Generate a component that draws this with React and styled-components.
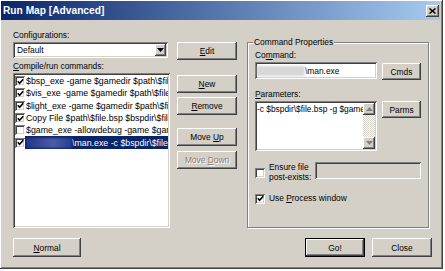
import React from 'react';
import styled, { createGlobalStyle, css } from 'styled-components';

const face = '#d4d0c8';

const GlobalStyle = createGlobalStyle`
  html, body { margin: 0; padding: 0; background: #fff; }
  body {
    font-family: "Liberation Sans", Arial, sans-serif;
    font-size: 8.4px;
    color: #000;
  }
`;

const raised = css`
  box-shadow: inset -1px -1px #404040, inset 1px 1px #fff, inset -2px -2px #808080, inset 2px 2px ${face};
`;

const sunken = css`
  box-shadow: inset 1px 1px #808080, inset -1px -1px #fff, inset 2px 2px #404040, inset -2px -2px ${face};
`;

const Window = styled.div`
  width: 443px;
  height: 269px;
  box-sizing: border-box;
  padding: 1px 3px 3px 1px;
  background: ${face};
  box-shadow: inset -1px -1px #404040, inset 1px 1px #fff, inset -2px -2px #808080;
  display: flex;
  flex-direction: column;
`;

const TitleBar = styled.div`
  height: 19px;
  display: flex;
  align-items: center;
  justify-content: space-between;
  background: linear-gradient(to right, #0a246a, #a6caf0);
  padding: 0 1px 0 2px;
`;

const Title = styled.span`
  color: #fff;
  font-weight: bold;
  font-size: 10.2px;
`;

const CloseBtn = styled.span`
  width: 13px;
  height: 12px;
  background: ${face};
  ${raised}
  display: flex;
  align-items: center;
  justify-content: center;
`;

const Body = styled.div`
  flex: 1;
  display: flex;
  flex-direction: column;
  padding: 9px 8px 0 12px;
`;

const Top = styled.div`
  display: grid;
  grid-template-columns: 157px 60px 185px;
  column-gap: 7px;
  & > :last-child { margin-left: 3px; }
`;

const Column = styled.div`
  display: flex;
  flex-direction: column;
`;

const Label = styled.div`
  height: 12px;
  line-height: 12px;
  margin-top: ${p => p.$mt || 0}px;
  margin-bottom: ${p => p.$mb || 0}px;
  white-space: nowrap;
`;

const Combo = styled.div`
  width: 155px;
  height: 16px;
  box-sizing: border-box;
  background: #fff;
  ${sunken}
  display: flex;
  align-items: center;
  justify-content: space-between;
  padding: 2px 2px 2px 4px;
`;

const DropBtn = styled.span`
  width: 11px;
  height: 12px;
  background: ${face};
  ${raised}
  display: flex;
  align-items: center;
  justify-content: center;
`;

const ListBox = styled.div`
  height: 155px;
  box-sizing: border-box;
  padding: 2px;
  background: #fff;
  ${sunken}
  overflow: hidden;
  font-size: 8.8px;
`;

const Row = styled.div`
  height: 12.3px;
  display: flex;
  align-items: center;
`;

const RowText = styled.span`
  flex: 1;
  height: 100%;
  display: flex;
  align-items: center;
  padding-left: 1px;
  white-space: nowrap;
  overflow: hidden;
  background: ${p => (p.$selected ? '#0a246a' : 'transparent')};
  color: ${p => (p.$selected ? '#fff' : '#000')};
`;

const Box = styled.span`
  width: 10px;
  height: 10px;
  flex: none;
  box-sizing: border-box;
  background: #fff;
  ${sunken}
  display: flex;
  align-items: center;
  justify-content: center;
  margin-top: ${p => p.$mt || 0}px;
`;

const Smudge = styled.span`
  display: inline-block;
  flex: none;
  width: ${p => p.$w}px;
  height: 10px;
  background: ${p => p.$bg};
  filter: blur(0.8px);
`;

const Button = styled.button`
  width: ${p => p.$w || 60}px;
  height: ${p => p.$h || 18}px;
  flex: none;
  margin-top: ${p => p.$mt || 0}px;
  padding: 0;
  border: 0;
  background: ${face};
  font: inherit;
  color: #000;
  ${raised}
  &:disabled {
    color: #808080;
    text-shadow: 1px 1px #fff;
  }
  ${p => p.$default && css`
    box-shadow: inset 0 0 0 1px #000, inset -2px -2px #404040, inset 2px 2px #fff, inset -3px -3px #808080;
  `}
`;

const GroupBox = styled.div`
  margin-top: 13px;
  border: 1px solid #808080;
  box-shadow: inset 1px 1px #fff, 1px 1px #fff;
  padding: 0 7px 0 7px;
  display: flex;
  flex-direction: column;
`;

const Legend = styled.div`
  align-self: flex-start;
  height: 12px;
  line-height: 12px;
  margin: -7px 0 1px -2px;
  padding: 0 1px;
  background: ${face};
`;

const FieldRow = styled.div`
  display: flex;
  align-items: flex-start;
  gap: 5px;
  margin-top: ${p => p.$mt || 0}px;
`;

const TextField = styled.div`
  width: ${p => p.$w}px;
  height: ${p => p.$h || 17}px;
  box-sizing: border-box;
  padding: 2px;
  background: ${p => (p.$disabled ? face : '#fff')};
  ${sunken}
  display: flex;
  align-items: ${p => (p.$multi ? 'stretch' : 'center')};
  overflow: hidden;
  white-space: nowrap;
`;

const AreaText = styled.div`
  flex: 1;
  overflow: hidden;
  padding: 1px 0 0 0;
  line-height: 11px;
`;

const ScrollBar = styled.div`
  width: 12px;
  flex: none;
  display: flex;
  flex-direction: column;
  background: repeating-conic-gradient(#fff 0 25%, ${face} 0 50%) 0 0 / 2px 2px;
`;

const ScrollBtn = styled.span`
  height: 12px;
  background: ${face};
  ${raised}
  display: flex;
  align-items: center;
  justify-content: center;
`;

const Track = styled.span`
  flex: 1;
`;

const CheckRow = styled.div`
  display: flex;
  align-items: ${p => p.$align || 'center'};
  margin-top: ${p => p.$mt || 0}px;
  height: ${p => p.$h || 'auto'};
`;

const CheckLabel = styled.span`
  flex: ${p => (p.$grow ? 1 : 'none')};
  margin-left: 4px;
  line-height: 10.3px;
`;

const Bottom = styled.div`
  display: flex;
  align-items: center;
  gap: 7px;
  margin-top: 10px;
  & > :first-child { margin-right: auto; }
`;

const Tick = () => (
  <svg width="7" height="7" viewBox="0 0 7 7">
    <polyline points="0.8,3.2 2.6,5.2 6.2,1.2" fill="none" stroke="#000" strokeWidth="1.6" />
  </svg>
);

const CheckBox = ({ checked, mt }) => <Box $mt={mt}>{checked && <Tick />}</Box>;

const Arrow = ({ up, color = '#000' }) => (
  <svg width="7" height="4" viewBox="0 0 7 4">
    <polygon points={up ? '0,4 7,4 3.5,0' : '0,0 7,0 3.5,4'} fill={color} />
  </svg>
);

const commands = [
  { on: true, text: '$bsp_exe -game $gamedir $path\\$file' },
  { on: true, text: '$vis_exe -game $gamedir $path\\$file' },
  { on: true, text: '$light_exe -game $gamedir $path\\$file' },
  { on: true, text: 'Copy File $path\\$file.bsp $bspdir\\$file' },
  { on: false, text: '$game_exe -allowdebug -game $gamedir' },
];

export default function App() {
  return (
    <>
      <GlobalStyle />
      <Window>
        <TitleBar>
          <Title>Run Map [Advanced]</Title>
          <CloseBtn>
            <svg width="7" height="6" viewBox="0 0 7 6">
              <path d="M0.5 0.5 L6.5 5.5 M6.5 0.5 L0.5 5.5" stroke="#000" strokeWidth="1.5" />
            </svg>
          </CloseBtn>
        </TitleBar>
        <Body>
          <Top>
            <Column>
              <Label $mb={1}>Configurations:</Label>
              <Combo>
                <span>Default</span>
                <DropBtn><Arrow /></DropBtn>
              </Combo>
              <Label $mt={2} $mb={1}><u>C</u>ompile/run commands:</Label>
              <ListBox>
                {commands.map((c, i) => (
                  <Row key={i}>
                    <CheckBox checked={c.on} />
                    <RowText>{c.text}</RowText>
                  </Row>
                ))}
                <Row>
                  <CheckBox checked />
                  <RowText $selected>
                    <Smudge $w={46} $bg="linear-gradient(to right, #22368a, #4a5ca8 60%, #2a3c8c)" />
                    \man.exe -c $bspdir\$file
                  </RowText>
                </Row>
              </ListBox>
            </Column>

            <Column>
              <Button $mt={13}><u>E</u>dit</Button>
              <Button $mt={15}><u>N</u>ew</Button>
              <Button $mt={4}><u>R</u>emove</Button>
              <Button $mt={13}>Move <u>U</u>p</Button>
              <Button $mt={5} disabled>Move <u>D</u>own</Button>
            </Column>

            <GroupBox>
              <Legend>Command Properties</Legend>
              <Label>Co<u>m</u>mand:</Label>
              <FieldRow $mt={1}>
                <TextField $w={125}>
                  <Smudge $w={48} $bg="repeating-linear-gradient(90deg, #b8b8b8 0 1px, #e6e6e6 1px 3px)" />
                  \man.exe
                </TextField>
                <Button $w={39} $h={17} $mt={1}>Cmds</Button>
              </FieldRow>
              <Label $mt={8} $mb={1}><u>P</u>arameters:</Label>
              <FieldRow>
                <TextField $w={125} $h={50} $multi>
                  <AreaText>-c $bspdir\$file.bsp -g $gamedir</AreaText>
                  <ScrollBar>
                    <ScrollBtn><Arrow up color="#808080" /></ScrollBtn>
                    <Track />
                    <ScrollBtn><Arrow color="#808080" /></ScrollBtn>
                  </ScrollBar>
                </TextField>
                <Button $w={39} $h={17}>Parms</Button>
              </FieldRow>
              <CheckRow $align="flex-start" $mt={11}>
                <CheckBox mt={6} />
                <CheckLabel $grow>Ensure file<br />post-exists:</CheckLabel>
                <TextField $w={106} $disabled />
              </CheckRow>
              <CheckRow $mt={10} $h="12px">
                <CheckBox checked />
                <CheckLabel>Use <u>P</u>rocess window</CheckLabel>
              </CheckRow>
            </GroupBox>
          </Top>

          <Bottom>
            <Button $w={68} $h={19}><u>N</u>ormal</Button>
            <Button $h={19} $default>Go!</Button>
            <Button $h={19}>Close</Button>
          </Bottom>
        </Body>
      </Window>
    </>
  );
}
